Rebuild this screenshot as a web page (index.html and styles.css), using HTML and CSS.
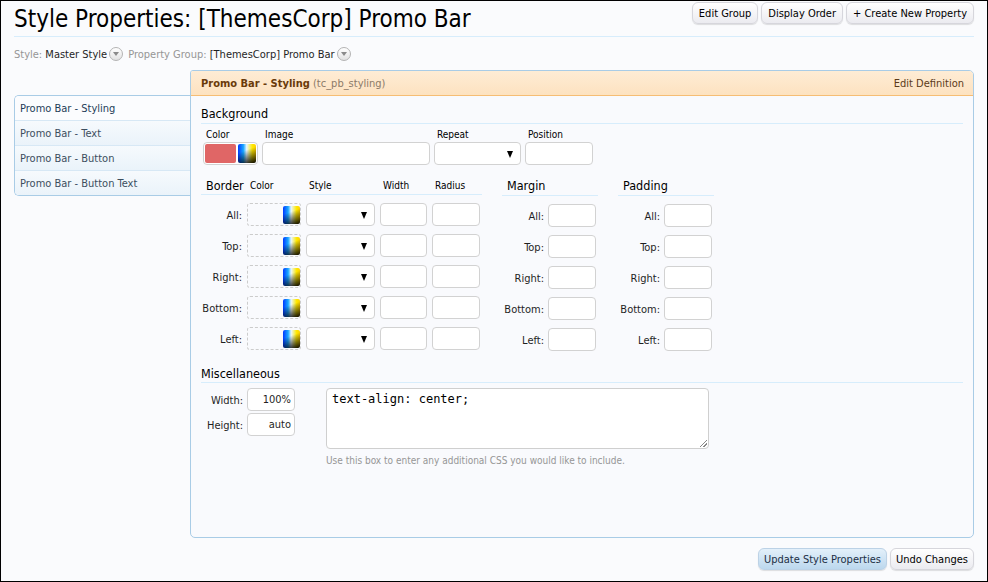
FILE: index.html
```html
<!DOCTYPE html>
<html>
<head>
<meta charset="utf-8">
<title>Style Properties</title>
<link rel="stylesheet" href="styles.css">
</head>
<body>
<div class="frame">
  <header class="titlebar">
    <h1 class="title">Style Properties: [ThemesCorp] Promo Bar</h1>
    <nav class="topctrls">
      <a class="btn">Edit Group</a>
      <a class="btn">Display Order</a>
      <a class="btn">+ Create New Property</a>
    </nav>
  </header>

  <div class="crumbs">
    <span class="crumb"><span class="muted">Style:</span> Master Style<span class="popup"></span></span>
    <span class="crumb"><span class="muted">Property Group:</span> [ThemesCorp] Promo Bar<span class="popup"></span></span>
  </div>

  <div class="workspace">
    <ul class="tabs">
      <li class="tab active">Promo Bar - Styling</li>
      <li class="tab">Promo Bar - Text</li>
      <li class="tab">Promo Bar - Button</li>
      <li class="tab">Promo Bar - Button Text</li>
    </ul>

    <section class="panel">
      <div class="panel-head">
        <span class="head-title"><b>Promo Bar - Styling</b> <span class="defid">(tc_pb_styling)</span></span>
        <a class="head-link">Edit Definition</a>
      </div>
      <div class="panel-body">
        <h3 class="sect">Background</h3>
        <div class="bgrow">
          <div class="field">
            <span class="flabel">Color</span>
            <div class="colorbox"><span class="swatch"></span><span class="picker"></span></div>
          </div>
          <div class="field">
            <span class="flabel">Image</span>
            <span class="txt w-image"></span>
          </div>
          <div class="field">
            <span class="flabel">Repeat</span>
            <span class="select w-repeat"></span>
          </div>
          <div class="field">
            <span class="flabel">Position</span>
            <span class="txt w-pos"></span>
          </div>
        </div>

        <div class="boxrow">
          <div class="group g-border">
            <div class="ghead border-grid">
              <span class="gtitle">Border</span>
              <span class="colh">Color</span>
              <span class="colh">Style</span>
              <span class="colh">Width</span>
              <span class="colh">Radius</span>
            </div>
            <div class="rows">
              <div class="border-grid row"><span class="rlabel">All:</span><span class="dashbox"><span class="picker sm"></span></span><span class="select"></span><span class="txt"></span><span class="txt"></span></div>
              <div class="border-grid row"><span class="rlabel">Top:</span><span class="dashbox"><span class="picker sm"></span></span><span class="select"></span><span class="txt"></span><span class="txt"></span></div>
              <div class="border-grid row"><span class="rlabel">Right:</span><span class="dashbox"><span class="picker sm"></span></span><span class="select"></span><span class="txt"></span><span class="txt"></span></div>
              <div class="border-grid row"><span class="rlabel">Bottom:</span><span class="dashbox"><span class="picker sm"></span></span><span class="select"></span><span class="txt"></span><span class="txt"></span></div>
              <div class="border-grid row"><span class="rlabel">Left:</span><span class="dashbox"><span class="picker sm"></span></span><span class="select"></span><span class="txt"></span><span class="txt"></span></div>
            </div>
          </div>

          <div class="group g-side">
            <div class="ghead"><span class="gtitle">Margin</span></div>
            <div class="rows">
              <div class="side-grid row"><span class="rlabel">All:</span><span class="txt"></span></div>
              <div class="side-grid row"><span class="rlabel">Top:</span><span class="txt"></span></div>
              <div class="side-grid row"><span class="rlabel">Right:</span><span class="txt"></span></div>
              <div class="side-grid row"><span class="rlabel">Bottom:</span><span class="txt"></span></div>
              <div class="side-grid row"><span class="rlabel">Left:</span><span class="txt"></span></div>
            </div>
          </div>

          <div class="group g-side">
            <div class="ghead"><span class="gtitle">Padding</span></div>
            <div class="rows">
              <div class="side-grid row"><span class="rlabel">All:</span><span class="txt"></span></div>
              <div class="side-grid row"><span class="rlabel">Top:</span><span class="txt"></span></div>
              <div class="side-grid row"><span class="rlabel">Right:</span><span class="txt"></span></div>
              <div class="side-grid row"><span class="rlabel">Bottom:</span><span class="txt"></span></div>
              <div class="side-grid row"><span class="rlabel">Left:</span><span class="txt"></span></div>
            </div>
          </div>
        </div>

        <h3 class="sect misc-head">Miscellaneous</h3>
        <div class="misc">
          <div class="dims">
            <div class="side-grid dimrow"><span class="rlabel">Width:</span><span class="txt val">100%</span></div>
            <div class="side-grid dimrow"><span class="rlabel">Height:</span><span class="txt val">auto</span></div>
          </div>
          <div class="extra">
            <div class="cssbox">text-align: center;<span class="grip"></span></div>
            <p class="hint">Use this box to enter any additional CSS you would like to include.</p>
          </div>
        </div>
      </div>
    </section>
  </div>

  <div class="footer">
    <a class="btn primary">Update Style Properties</a>
    <a class="btn">Undo Changes</a>
  </div>
</div>
</body>
</html>
```

FILE: styles.css
```css
* { box-sizing: border-box; }

html, body {
  margin: 0;
  padding: 0;
  background: #fafbfd;
}

body {
  font-family: "DejaVu Sans Condensed", "DejaVu Sans", "Liberation Sans", sans-serif;
  font-stretch: condensed;
  font-size: 11px;
  color: #141414;
}

.frame {
  width: 988px;
  height: 582px;
  border: 1px solid #000;
  background: #fafbfd;
  padding: 0 13px;
  display: flex;
  flex-direction: column;
}

/* title bar */
.titlebar {
  height: 36px;
  border-bottom: 1px solid #d7edfc;
  display: flex;
  justify-content: space-between;
  align-items: flex-start;
}

.title {
  margin: 0;
  font-weight: normal;
  font-size: 24px;
  line-height: 30px;
  padding-top: 3px;
  color: #000;
}

.topctrls {
  display: flex;
  gap: 3px;
  margin-top: 1px;
}

.btn {
  display: inline-flex;
  align-items: center;
  height: 22px;
  padding: 0 6px;
  font-size: 11px;
  color: #000;
  border: 1px solid #d6d6dc;
  border-radius: 6px;
  background: linear-gradient(#ffffff, #ebebf0);
  box-shadow: 0 1px 1px rgba(0, 0, 0, 0.12);
  white-space: nowrap;
}

.btn.primary {
  background: linear-gradient(#e3f0fa, #bcd8ee);
  border-color: #bcd2e6;
  color: #1c2f45;
}

/* crumbs */
.crumbs {
  display: flex;
  gap: 5px;
  height: 33px;
  align-items: center;
  padding-top: 1px;
  color: #1f1f1f;
}

.crumb {
  display: inline-flex;
  align-items: center;
  white-space: pre;
}

.muted { color: #969696; }

.popup {
  width: 14px;
  height: 14px;
  margin-left: 2px;
  border: 1px solid #b4b4b4;
  border-radius: 50%;
  background: linear-gradient(#ffffff, #e2e2e2);
  position: relative;
}

.popup::after {
  content: "";
  position: absolute;
  left: 3px;
  top: 4px;
  border-left: 3.5px solid transparent;
  border-right: 3.5px solid transparent;
  border-top: 4px solid #8a8a8a;
}

/* workspace */
.workspace {
  display: flex;
  align-items: flex-start;
}

.tabs {
  list-style: none;
  margin: 25px 0 0;
  padding: 0;
  width: 176px;
  border: 1px solid #a9cce6;
  border-right: none;
  border-radius: 5px 0 0 5px;
  overflow: hidden;
}

.tab {
  height: 25px;
  line-height: 24px;
  padding: 1px 0 0 5px;
  border-top: 1px solid #d7e8f5;
  color: #3c4e5e;
  background: linear-gradient(#f6fafd, #eaf3fa);
}

.tab:first-child {
  border-top: none;
  height: 24px;
}

.tab.active {
  background: #fbfcfe;
  color: #1e3c58;
}

.panel {
  width: 784px;
  height: 468px;
  border: 1px solid #a9cce6;
  border-radius: 3px 5px 5px 5px;
  background: #f9fafd;
  overflow: hidden;
  display: flex;
  flex-direction: column;
}

.panel-head {
  height: 25px;
  display: flex;
  justify-content: space-between;
  align-items: center;
  padding: 0 9px 0 10px;
  background: linear-gradient(#feecd5, #fde2c0);
  border-bottom: 1px solid #f6bd74;
  color: #6a3a0a;
}

.head-title b { font-weight: bold; }
.defid { color: #8c7a68; }
.head-link { color: #5b3a19; }

.panel-body {
  padding: 10px 10px 0;
}

.sect {
  margin: 0;
  font-weight: normal;
  font-size: 12.5px;
  line-height: 15px;
  padding: 0 0 2px;
  color: #000;
  border-bottom: 1px solid #d7edfc;
}

.bgrow {
  display: flex;
  gap: 4px;
  margin-top: 5px;
  padding-left: 2px;
}

.field {
  display: flex;
  flex-direction: column;
  gap: 1px;
}

.flabel {
  font-size: 10px;
  line-height: 12px;
  padding-left: 3px;
  color: #000;
}

.txt, .select, .colorbox {
  display: block;
  height: 23px;
  background: #fff;
  border: 1px solid #d2d2d2;
  border-radius: 4px;
}

.colorbox {
  width: 55px;
  padding: 1px;
  display: flex;
  gap: 2px;
  align-items: center;
}

.swatch {
  width: 32px;
  height: 19px;
  border-radius: 2px;
  background: #e06666;
}

.picker {
  display: block;
  width: 18px;
  height: 19px;
  border-radius: 2px;
  background:
    linear-gradient(160deg, rgba(0,0,0,0) 35%, rgba(0,0,0,0.95) 100%),
    linear-gradient(90deg, #0038ff 0%, #1aa8ff 30%, #e8f6ff 48%, #ffe800 80%, #ffd000 100%);
}

.picker.sm {
  width: 17px;
  height: 18px;
}

.w-image { width: 168px; }
.w-repeat { width: 87px; }
.w-pos { width: 68px; }

.select {
  position: relative;
}

.select::after {
  content: "";
  position: absolute;
  right: 7px;
  top: 8px;
  border-left: 3.5px solid transparent;
  border-right: 3.5px solid transparent;
  border-top: 7px solid #000;
}

/* border / margin / padding */
.boxrow {
  display: flex;
  gap: 20px;
  margin-top: 13px;
}

.ghead {
  border-bottom: 1px solid #d7edfc;
  line-height: 15px;
  padding-bottom: 1px;
  align-items: end;
}

.gtitle {
  font-size: 12.5px;
  padding-left: 5px;
  color: #000;
}

.colh {
  font-size: 10px;
  padding-left: 3px;
  color: #000;
}

.g-border { width: 281px; }
.g-side { width: 96px; }

.border-grid {
  display: grid;
  grid-template-columns: 41px 54px 69px 47px 48px;
  column-gap: 5px;
}

.side-grid {
  display: grid;
  grid-template-columns: 42px 48px;
  column-gap: 4px;
}

.rows {
  display: flex;
  flex-direction: column;
  gap: 8px;
  margin-top: 8px;
}

.row { height: 23px; }

.rlabel {
  text-align: right;
  align-self: center;
  color: #1f1f1f;
  white-space: nowrap;
  padding-top: 1px;
}

.dashbox {
  height: 23px;
  border: 1px dashed #cccccc;
  border-radius: 3px;
  display: flex;
  justify-content: flex-end;
  align-items: center;
}

/* misc */
.misc-head {
  margin-top: 15px;
  padding-bottom: 1px;
}

.misc {
  display: flex;
  gap: 31px;
  margin-top: 5px;
}

.dims {
  display: flex;
  flex-direction: column;
  gap: 2px;
}

.dimrow { height: 23px; }

.val {
  text-align: right;
  padding-right: 3px;
  line-height: 21px;
  color: #1f1f1f;
}

.cssbox {
  position: relative;
  width: 383px;
  height: 61px;
  background: #fff;
  border: 1px solid #cfcfcf;
  border-radius: 4px;
  padding: 3px 5px;
  font-family: "DejaVu Sans Mono", "Liberation Mono", monospace;
  font-size: 12px;
  line-height: 15px;
  color: #000;
}

.grip {
  position: absolute;
  right: 1px;
  bottom: 1px;
  width: 7px;
  height: 7px;
  background: linear-gradient(135deg, transparent 45%, #888 46%, #888 54%, transparent 55%, transparent 70%, #888 71%, #888 79%, transparent 80%);
}

.hint {
  margin: 6px 0 0;
  font-size: 10px;
  line-height: 12px;
  color: #969696;
}

/* footer */
.footer {
  display: flex;
  justify-content: flex-end;
  gap: 3px;
  margin-top: 10px;
}

.footer .btn {
  padding: 0 5px;
}
```
